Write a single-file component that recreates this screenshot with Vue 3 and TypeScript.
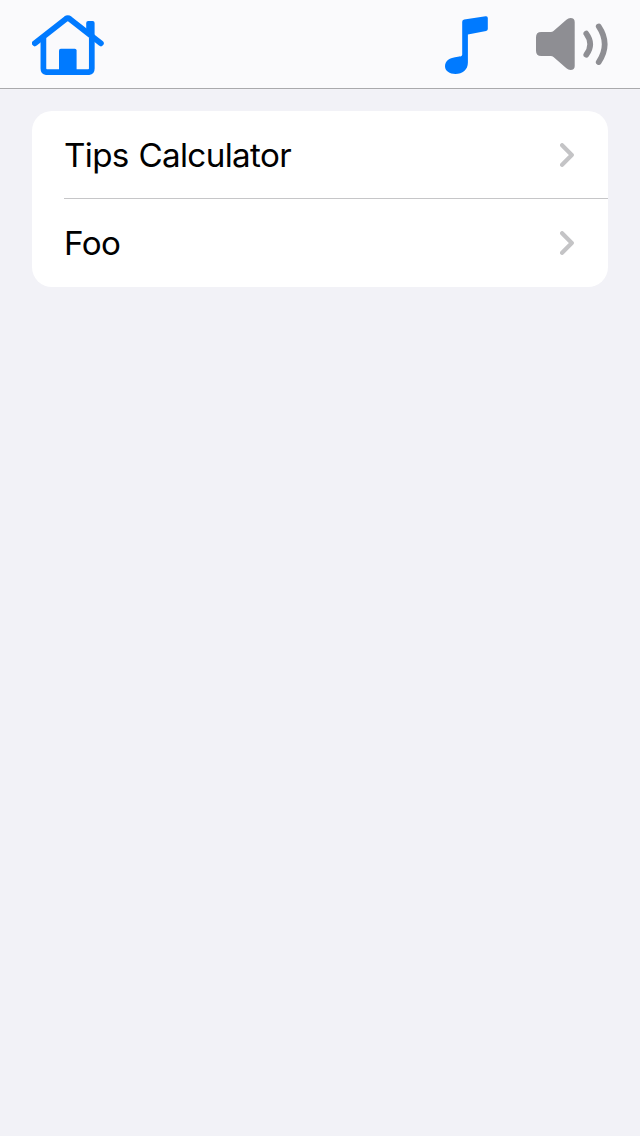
<script setup lang="ts">
interface MenuItem {
  id: string
  label: string
}

const items: MenuItem[] = [
  { id: 'tips', label: 'Tips Calculator' },
  { id: 'foo', label: 'Foo' },
]
</script>

<template>
  <div class="screen">
    <header class="toolbar">
      <button class="tool" aria-label="Home">
        <svg width="72" height="60" viewBox="32 15 72 60">
          <path d="M86.2 34V23Q86.2 21 88.2 21H92.6Q94.6 21 94.6 23V41Z" fill="#007aff" />
          <path d="M34.9 43.3L65.8 19Q67.8 17.6 69.8 19L100.8 43.3" fill="none" stroke="#007aff" stroke-width="5.9" stroke-linecap="round" />
          <path d="M43.4 38V68.6Q43.4 72.2 47 72.2H88.2Q91.8 72.2 91.8 68.6V38" fill="none" stroke="#007aff" stroke-width="5.7" />
          <path d="M59 74V50.6Q59 48.8 60.8 48.8H74.8Q76.6 48.8 76.6 50.6V74Z" fill="#007aff" />
        </svg>
      </button>
      <div class="actions">
        <button class="tool" aria-label="Music">
          <svg width="43" height="58" viewBox="445 16 43 58">
            <path d="M462.2 21.8Q462.2 20 464.2 19.6L485.6 16.2Q487.8 15.9 487.8 18V29.1Q487.8 30.7 486.1 31L467.9 34.5V62.5C467.9 69.8 462.5 74 455.4 74C449.6 74 445 71 445 66.3C445 60.8 449.5 58.1 455 57.2C459.4 56.5 462.2 57 462.2 54.6Z" fill="#007aff" />
          </svg>
        </button>
        <button class="tool" aria-label="Sound">
          <svg width="72" height="52" viewBox="536 18 72 52">
            <path d="M541.2 32H550.8Q552.3 32 553.5 31L566.4 19.7Q568.3 18 570.5 18Q574.7 18 574.7 22V66Q574.7 70 570.5 70Q568.3 70 566.4 68.3L553.5 57Q552.3 56 550.8 56H541.2Q536 56 536 50.8V37.2Q536 32 541.2 32Z" fill="#8e8e93" />
            <path d="M586.3 33.6Q594.1 44.2 586.3 54.8M598.7 26.4Q610.7 44.2 598.7 62.1" fill="none" stroke="#8e8e93" stroke-width="5.7" stroke-linecap="round" />
          </svg>
        </button>
      </div>
    </header>
    <main class="content">
      <ul class="list">
        <li v-for="item in items" :key="item.id" class="row">
          <span class="label">{{ item.label }}</span>
          <svg class="chevron" width="14" height="24" viewBox="0 0 14 24">
            <path d="M2.1 2.2L11.8 12L2.1 21.8" fill="none" stroke="#c4c4c6" stroke-width="4.2" stroke-linecap="round" stroke-linejoin="round" />
          </svg>
        </li>
      </ul>
    </main>
  </div>
</template>

<style>
html,
body {
  background: #f2f2f7;
}
</style>

<style scoped>
.screen {
  min-height: 1136px;
  background: #f2f2f7;
  font-family: Inter, "Liberation Sans", sans-serif;
}
.toolbar {
  box-sizing: border-box;
  height: 89px;
  padding: 0 32px;
  display: flex;
  justify-content: space-between;
  background: #fafafc;
  border-bottom: 1px solid #a9a9ac;
}
.tool {
  display: flex;
  align-items: center;
  padding: 2px 0 0;
  border: 0;
  background: none;
}
.actions {
  display: flex;
  gap: 48px;
}
.actions .tool {
  padding-top: 1px;
}
.actions .tool:last-child {
  padding-top: 0;
}
.content {
  padding: 22px 32px;
}
.list {
  margin: 0;
  padding: 0;
  list-style: none;
  background: #fff;
  border-radius: 20px;
}
.row {
  box-sizing: border-box;
  height: 88px;
  margin-left: 32px;
  padding-right: 34px;
  display: flex;
  align-items: center;
  justify-content: space-between;
  border-bottom: 1px solid #c6c6c8;
}
.row:last-child {
  border-bottom: 0;
}
.label {
  font-size: 33.2px;
  line-height: 40px;
  letter-spacing: -0.65px;
  word-spacing: 1px;
  color: #000;
}
</style>
